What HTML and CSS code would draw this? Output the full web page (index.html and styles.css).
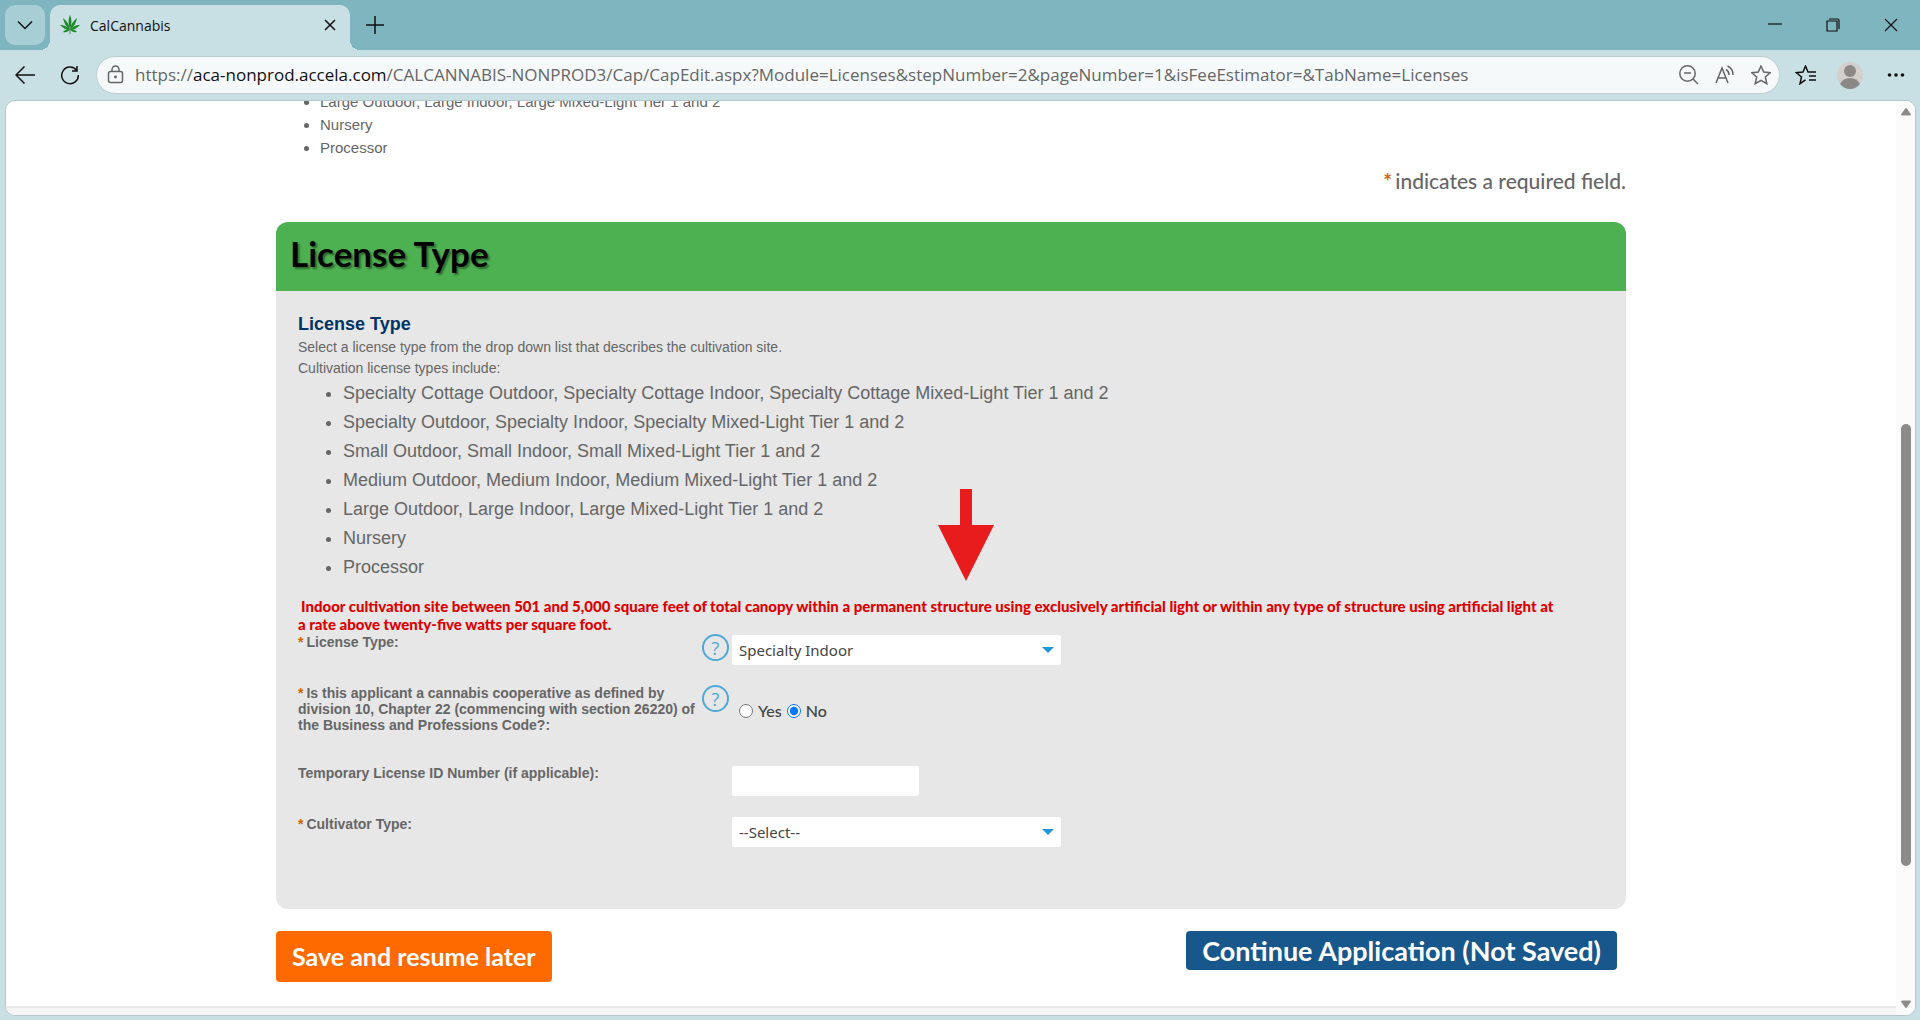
FILE: index.html
```
<!DOCTYPE html>
<html lang="en">
<head>
    <meta charset="UTF-8">
    <meta name="viewport" content="width=device-width, initial-scale=1.0">
    <title>CalCannabis</title>
    <link rel="stylesheet" href="styles.css">
</head>
<body>

<!-- Tab strip -->
<header class="tab-strip">
    <button class="tab-menu" aria-label="Tab actions">
        <svg width="16" height="10" viewBox="0 0 16 10"><path d="M1 1.5l7 7 7-7"/></svg>
    </button>
    <div class="tab">
        <svg class="leaf" width="20" height="20" viewBox="0 0 20 20">
            <path d="M10 0C8 4 8 9 10 14C12 9 12 4 10 0Z"/>
            <path d="M3 3C4 8 6 12 10 14.500C9.500 10 7 6 3 3Z"/>
            <path d="M17 3C16 8 14 12 10 14.500C10.500 10 13 6 17 3Z"/>
            <path d="M0 10C3 13 6 15 10 15C8 11.500 4 10 0 10Z"/>
            <path d="M20 10C17 13 14 15 10 15C12 11.500 16 10 20 10Z"/>
            <path d="M3 17C6 17.500 8 17 10 14.500C7 14 5 15 3 17Z"/>
            <path d="M17 17C14 17.500 12 17 10 14.500C13 14 15 15 17 17Z"/>
            <path d="M9.600 14h.8v5h-.8z"/>
        </svg>
        <span class="tab-title">CalCannabis</span>
        <button class="icon-btn" aria-label="Close tab">
            <svg width="12" height="12" viewBox="0 0 12 12"><path d="M1 1l10 10M11 1L1 11"/></svg>
        </button>
    </div>
    <button class="icon-btn new-tab" aria-label="New tab">
        <svg width="20" height="20" viewBox="0 0 20 20"><path d="M10 1v18M1 10h18"/></svg>
    </button>
    <div class="window-buttons">
        <button class="icon-btn" aria-label="Minimize">
            <svg width="14" height="14" viewBox="0 0 14 14"><path d="M0 6h14"/></svg>
        </button>
        <button class="icon-btn" aria-label="Restore">
            <svg width="14" height="14" viewBox="0 0 14 14"><path d="M1 3h10v10H1zM3 1h8.500q1.500 0 1.500 1.500V11"/></svg>
        </button>
        <button class="icon-btn" aria-label="Close">
            <svg width="14" height="14" viewBox="0 0 14 14"><path d="M1 1l12 12M13 1L1 13"/></svg>
        </button>
    </div>
</header>

<!-- Address bar -->
<nav class="toolbar">
    <button class="icon-btn" aria-label="Back">
        <svg width="20" height="18" viewBox="0 0 20 18"><path d="M20 9H1M9.500 .5L1 9l8.500 8.500"/></svg>
    </button>
    <button class="icon-btn" aria-label="Refresh">
        <svg width="20" height="20" viewBox="0 0 20 20"><path d="M16.500 5.200A8.300 8.300 0 1 0 18.300 10M17 1v5h-5"/></svg>
    </button>
    <div class="address">
        <svg class="gray-icon" width="18" height="20" viewBox="0 0 18 20"><rect x="1.500" y="6.500" width="14" height="11" rx="2"/><path d="M5 6.500V4.500a3.500 3.500 0 0 1 7 0v2"/><circle cx="8.500" cy="12" r=".7"/></svg>
        <span class="url">https://<b>aca-nonprod.accela.com</b>/CALCANNABIS-NONPROD3/Cap/CapEdit.aspx?Module=Licenses&amp;stepNumber=2&amp;pageNumber=1&amp;isFeeEstimator=&amp;TabName=Licenses</span>
        <button class="icon-btn gray-icon" aria-label="Zoom out">
            <svg width="20" height="20" viewBox="0 0 20 20"><circle cx="8.500" cy="8.500" r="7.700"/><path d="M14 14l5 5M5 8h7"/></svg>
        </button>
        <button class="icon-btn gray-icon" aria-label="Read aloud">
            <svg width="20" height="20" viewBox="0 0 20 20"><path d="M1 18L7 3l6 15M3.200 13h7.600M11 4.500a6 6 0 0 1 3 5.500M12.500 1a9.500 9.500 0 0 1 5.500 9"/></svg>
        </button>
        <button class="icon-btn gray-icon" aria-label="Add to favorites">
            <svg width="20" height="20" viewBox="0 0 20 20"><path d="M10 1l2.700 6 6.500.7-4.900 4.300 1.500 6.700L10 15.300l-5.800 3.400L5.700 12 .8 7.700 7.300 7z"/></svg>
        </button>
    </div>
    <button class="icon-btn" aria-label="Favorites">
        <svg width="22" height="20" viewBox="0 0 22 20"><path d="M10.500 14.800L5 18.700 6.500 12 1.500 7.700 8 7l2.500-6L13 7h8M14 11h7M14 15h7"/></svg>
    </button>
    <button class="icon-btn" aria-label="Profile">
        <svg class="avatar" width="26" height="28" viewBox="0 0 26 28"><circle class="avatar-bg" cx="13" cy="14" r="13"/><circle cx="13" cy="10" r="6"/><path d="M3 23q3-6 10-6t10 6q-4 5-10 5T3 23z"/></svg>
    </button>
    <button class="icon-btn" aria-label="Settings and more">
        <svg class="dots" width="18" height="4" viewBox="0 0 18 4"><circle cx="2.500" cy="2" r="1.800"/><circle cx="9" cy="2" r="1.800"/><circle cx="15.500" cy="2" r="1.800"/></svg>
    </button>
</nav>

<div class="viewport">
    <main class="page">
        <div class="container">
            <ul class="intro-list">
                <li>Large Outdoor, Large Indoor, Large Mixed-Light Tier 1 and 2</li>
                <li>Nursery</li>
                <li>Processor</li>
            </ul>
            <p class="required-note"><span class="star">*</span>indicates a required field.</p>

            <form class="card">
                <h1>License Type</h1>
                <div class="card-body">
                    <h2>License Type</h2>
                    <p>Select a license type from the drop down list that describes the cultivation site.</p>
                    <p>Cultivation license types include:</p>
                    <ul class="type-list">
                        <li>Specialty Cottage Outdoor, Specialty Cottage Indoor, Specialty Cottage Mixed-Light Tier 1 and 2</li>
                        <li>Specialty Outdoor, Specialty Indoor, Specialty Mixed-Light Tier 1 and 2</li>
                        <li>Small Outdoor, Small Indoor, Small Mixed-Light Tier 1 and 2</li>
                        <li>Medium Outdoor, Medium Indoor, Medium Mixed-Light Tier 1 and 2</li>
                        <li>Large Outdoor, Large Indoor, Large Mixed-Light Tier 1 and 2</li>
                        <li>Nursery</li>
                        <li>Processor</li>
                    </ul>
                    <p class="description">Indoor cultivation site between 501 and 5,000 square feet of total canopy within a permanent structure using exclusively artificial light or within any type of structure using artificial light at a&nbsp;rate above twenty-five watts per square foot.</p>

                    <div class="field">
                        <label for="license-type"><span class="star">*</span>License Type:</label>
                        <button type="button" class="help" aria-label="Help">?</button>
                        <div class="select">
                            <select id="license-type">
                                <option>Specialty Indoor</option>
                            </select>
                        </div>
                    </div>
                    <div class="field field-tall" role="radiogroup" aria-labelledby="coop-label">
                        <span class="label" id="coop-label"><span class="star">*</span>Is this applicant a cannabis cooperative as defined by division 10, Chapter 22 (commencing with section 26220) of the Business and Professions Code?:</span>
                        <button type="button" class="help" aria-label="Help">?</button>
                        <div class="radios">
                            <input type="radio" name="coop" id="coop-yes"><label for="coop-yes">Yes</label>
                            <input type="radio" name="coop" id="coop-no" checked><label for="coop-no">No</label>
                        </div>
                    </div>
                    <div class="field">
                        <label for="temp-id">Temporary License ID Number (if applicable):</label>
                        <input type="text" id="temp-id">
                    </div>
                    <div class="field">
                        <label for="cultivator-type"><span class="star">*</span>Cultivator Type:</label>
                        <div class="select">
                            <select id="cultivator-type">
                                <option>--Select--</option>
                            </select>
                        </div>
                    </div>
                </div>
                <svg class="arrow" width="56" height="92" viewBox="0 0 56 92"><path d="M22 0h12v36h22L28 92 0 36h22z"/></svg>
            </form>

            <div class="actions">
                <button class="btn save">Save and resume later</button>
                <button class="btn continue">Continue Application (Not Saved)</button>
            </div>
        </div>
        <footer class="page-footer"></footer>
    </main>

    <!-- Scrollbar -->
    <div class="scrollbar">
        <svg width="10" height="8" viewBox="0 0 10 8"><path d="M4 .7q1-1.200 2 0L9.700 6q.5 1.500-.7 1.500H1Q-.2 7.500.3 6z"/></svg>
        <div class="space-above"></div>
        <div class="thumb"></div>
        <div class="space-below"></div>
        <svg width="10" height="8" viewBox="0 0 10 8"><path d="M4 7.300q1 1.200 2 0L9.700 2q.5-1.500-.7-1.500H1Q-.2.5.3 2z"/></svg>
    </div>
</div>

</body>
</html>
```
FILE: styles.css
```
* {
    box-sizing: border-box;
}
body {
    margin: 0;
    height: 100vh;
    display: flex;
    flex-direction: column;
    background-color: #c8dfe3;
    font-family: "Liberation Sans", Arial, sans-serif;
    color: #666;
}
button {
    font-family: inherit;
    cursor: pointer;
}
h1, h2, p, ul {
    margin: 0;
}
svg {
    display: block;
    fill: none;
    stroke: #111;
    stroke-width: 1.5;
}

/* Tab strip */
.tab-strip {
    display: flex;
    height: 50px;
    padding: 5px 15px 0 5px;
    background-color: #7eb5be;
}
.tab-menu {
    display: flex;
    align-items: center;
    justify-content: center;
    width: 40px;
    height: 40px;
    margin-right: 5px;
    border: none;
    border-radius: 10px;
    background-color: #a6ced4;
}
.tab {
    position: relative;
    display: flex;
    align-items: center;
    width: 300px;
    padding: 0 9px 5px 10px;
    border-radius: 10px 10px 0 0;
    background-color: #c8dfe3;
}
/* flared feet of the active tab */
.tab::before,
.tab::after {
    content: "";
    position: absolute;
    bottom: 0;
    width: 10px;
    height: 10px;
}
.tab::before {
    left: -10px;
    background: radial-gradient(circle at 0 0, transparent 10px, #c8dfe3 10px);
}
.tab::after {
    right: -10px;
    background: radial-gradient(circle at 100% 0, transparent 10px, #c8dfe3 10px);
}
.leaf {
    fill: #1f8a2b;
    stroke: none;
}
.tab-title {
    flex: 1;
    margin-left: 10px;
    font-family: "Open Sans", sans-serif;
    font-size: 14px;
    color: #111;
}
.icon-btn {
    display: flex;
    align-items: center;
    justify-content: center;
    padding: 0;
    border: none;
    background: none;
}
.tab .icon-btn {
    width: 22px;
    height: 22px;
}
.new-tab {
    width: 40px;
    height: 40px;
    margin-left: 5px;
}
.window-buttons {
    display: flex;
    gap: 44px;
    height: 40px;
    margin-left: auto;
    margin-right: 7px;
}
.window-buttons svg {
    stroke-width: 1.2;
}

/* Address bar */
.toolbar {
    display: flex;
    align-items: center;
    height: 50px;
    padding: 0 15px;
}
.toolbar > .icon-btn:nth-child(2) {
    margin: 0 16px 0 25px;
}
.address {
    flex: 1;
    display: flex;
    align-items: center;
    height: 38px;
    padding: 0 8px 0 10px;
    border: 1px solid #bfcfd2;
    border-radius: 20px;
    background-color: #f5f9fa;
}
.address .icon-btn {
    margin-left: 16px;
}
.gray-icon,
.gray-icon svg {
    stroke: #666;
}
.url {
    flex: 1;
    margin-left: 10px;
    padding-bottom: 2px;
    font-family: "Open Sans", sans-serif;
    font-size: 17px;
    white-space: nowrap;
    color: #666;
}
.url b {
    font-weight: 400;
    color: #111;
}
.address + .icon-btn {
    margin: 0 20px 0 15px;
}
.avatar {
    fill: #8b8886;
    stroke: none;
}
.avatar-bg {
    fill: #d2cfcc;
}
.toolbar > .icon-btn:last-child {
    margin-left: 24px;
}
.dots {
    fill: #111;
    stroke: none;
}

/* Page */
.viewport {
    flex: 1;
    display: flex;
    min-height: 0;
    margin: 0 4px 4px 5px;
    border: 1px solid #b4c8cc;
    border-radius: 10px;
    background-color: #fff;
    overflow: hidden;
}
.page {
    flex: 1;
    display: flex;
    flex-direction: column;
}
.container {
    flex: 1;
    width: 100%;
    max-width: 1350px;
    margin: -11px auto 0;
}
.intro-list {
    padding-left: 44px;
    font-size: 15px;
    line-height: 23px;
}
.required-note {
    margin: 10px 0 29px;
    font-family: Lato, sans-serif;
    font-size: 21px;
    font-weight: 500;
    line-height: 24px;
    text-align: right;
}
.star {
    margin-right: 3px;
    font-weight: 700;
    color: #cc6600;
}
.card {
    position: relative;
    border-radius: 12px;
    background-color: #e7e7e7;
    overflow: hidden;
}
.card h1 {
    padding: 11px 14px 18px;
    background-color: #4eb151;
    font-family: Lato, sans-serif;
    font-size: 35px;
    line-height: 40px;
    color: #000;
    text-shadow: 2px 2px 2px rgba(0, 0, 0, 0.4);
}
.card-body {
    padding: 22px 22px 12px;
    font-size: 14px;
    line-height: 21px;
}
.card-body h2 {
    margin-bottom: 1px;
    font-size: 18px;
    line-height: 23px;
    color: #003366;
}
.type-list {
    padding-left: 45px;
    font-size: 18px;
    line-height: 29px;
}
.card-body .description {
    margin: 15px 0 1px;
    padding-right: 16px;
    font-family: Lato, sans-serif;
    font-size: 15px;
    font-weight: 900;
    line-height: 18px;
    text-indent: 3px;
    color: #dd0000;
}
.field {
    display: grid;
    grid-template-columns: 401px 27px 329px;
    column-gap: 3px;
    align-items: start;
    min-height: 51px;
}
.field-tall {
    min-height: 80px;
}
.field:last-child {
    min-height: 81px;
}
.field > label,
.label {
    font-size: 14px;
    font-weight: 700;
    line-height: 16px;
}
.help {
    width: 27px;
    height: 27px;
    padding: 0;
    border: 2px solid #4fa9d8;
    border-radius: 50%;
    background: none;
    font-family: "Open Sans", sans-serif;
    font-size: 18px;
    line-height: 22px;
    color: #4fa9d8;
}
.select {
    position: relative;
    grid-column: 3;
    margin-top: 1px;
}
.select::after {
    content: "";
    position: absolute;
    top: 12px;
    right: 7px;
    border: 6px solid transparent;
    border-top-color: #1f96d6;
    border-bottom: none;
    pointer-events: none;
}
.select select {
    appearance: none;
    width: 100%;
    height: 30px;
    padding: 0 7px;
    border: none;
    border-radius: 2px;
    background-color: #fff;
    font-family: "Noto Sans", sans-serif;
    font-size: 15px;
    color: #444;
}
.field input[type="text"] {
    grid-column: 3;
    width: 187px;
    height: 30px;
    margin-top: 1px;
    border: none;
    border-radius: 2px;
    background-color: #fff;
}
.radios {
    display: flex;
    align-items: center;
    padding: 16px 0 0 7px;
    font-family: Lato, sans-serif;
    font-size: 16px;
    font-weight: 500;
    line-height: 20px;
    color: #444;
}
.radios input {
    width: 14px;
    height: 14px;
    margin: 0 5px 0 0;
}
.radios label {
    margin-right: 5px;
}
.arrow {
    position: absolute;
    top: 267px;
    left: 49%;
    fill: #e81c1c;
    stroke: none;
}
.actions {
    display: flex;
    align-items: flex-start;
    justify-content: space-between;
    padding: 22px 9px 0 0;
}
.btn {
    border: none;
    border-radius: 4px;
    font-family: Lato, sans-serif;
    font-weight: 700;
    line-height: 31px;
    color: #fff;
}
.save {
    padding: 10px 16px;
    background-color: #ff6a00;
    font-size: 25px;
}
.continue {
    padding: 4px 16px;
    background-color: #18578b;
    font-size: 27px;
}
.page-footer {
    height: 9px;
    border-top: 2px solid #e8e8e8;
    background-color: #f5f5f5;
}

/* Scrollbar */
.scrollbar {
    display: flex;
    flex-direction: column;
    align-items: center;
    width: 19px;
    padding: 7px 0;
    background-color: #fbfbfb;
}
.scrollbar svg {
    fill: #8b8b8b;
    stroke: none;
}
.thumb {
    flex: 442;
    width: 10px;
    border-radius: 5px;
    background-color: #8b8b8b;
}
.space-above {
    flex: 308;
}
.space-below {
    flex: 134;
}
```
